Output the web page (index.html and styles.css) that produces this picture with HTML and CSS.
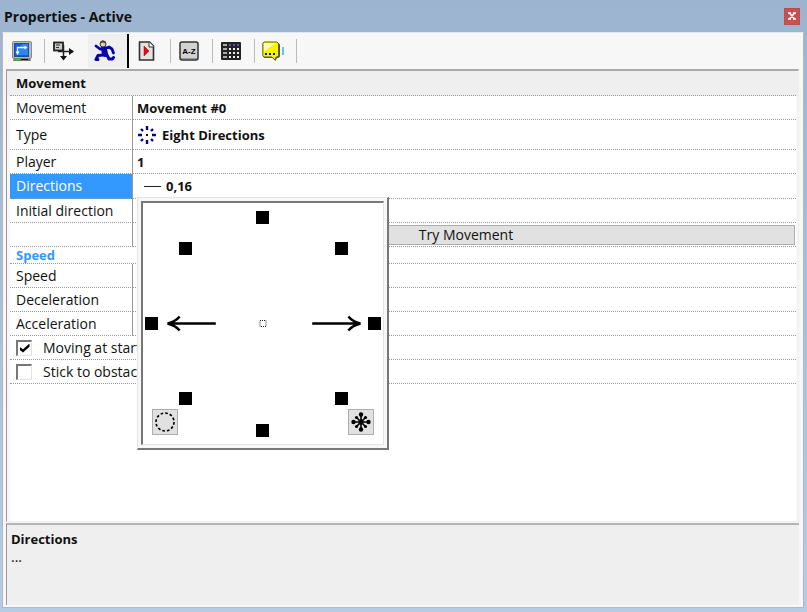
FILE: index.html
```html
<!DOCTYPE html>
<html lang="en">
<head>
<meta charset="utf-8">
<title>Properties - Active</title>
<link rel="stylesheet" href="styles.css">
</head>
<body>
<main class="window">
  <header class="titlebar">
    <h1 class="title">Properties - Active</h1>
    <button class="close" type="button" aria-label="Close">
      <svg width="8" height="8" viewBox="0 0 8 8"><path d="M0 1h3M5 1h3M0 7h3M5 7h3M1.500 1L6.500 7M6.500 1L1.500 7" fill="none" stroke="#fff" stroke-width="1.600"/></svg>
    </button>
  </header>
  <div class="client">
    <nav class="tabs">
      <button class="tab" type="button" aria-label="Display">
        <svg width="20" height="20" viewBox="0 0 20 20"><rect x=".5" y=".5" width="19" height="17" rx="1.500" fill="#b8b8b8" stroke="#8a8a8a"/><rect x="2.500" y="2.500" width="14" height="13" fill="#0b62d8" stroke="#1b4f9b"/><path d="M10 3h6v11H4z" fill="#2b86ee"/><path d="M5.500 12V6.500H14" fill="none" stroke="#fff" stroke-width="1.400"/><path d="M3.500 10.500h4L5.500 14zM12.500 4.500v4l3-2z" fill="#fff"/><path d="M2 17h16l1 3H1z" fill="#777"/><path d="M3 18.500h5" stroke="#1be01b" stroke-width="1.500"/><path d="M9 18.500h7" stroke="#111"/></svg>
      </button>
      <button class="tab" type="button" aria-label="Size and position">
        <svg width="22" height="20" viewBox="0 0 22 20"><rect x="1" y="1.500" width="9" height="8" fill="#ccc" stroke="#222" stroke-width="1.800"/><path d="M3 4h4M3 6.500h3" stroke="#333"/><path d="M10.500 4v14M5 10.500h15" fill="none" stroke="#222" stroke-width="1.500"/><path d="M16 7l5 3.500-5 3.500zM7 15h7l-3.500 4.500z" fill="#111"/></svg>
      </button>
      <button class="tab active" type="button" aria-label="Movement">
        <svg width="22" height="22" viewBox="0 0 22 22"><g fill="none" stroke="#0505ae" stroke-linejoin="round" stroke-linecap="round"><path d="M2 6l4 3 5-.5 4-1.500 3 2 1.500 4" stroke-width="2.800"/><path d="M10 9l1 5" stroke-width="6"/><path d="M9 15l-5 .500-2 4M2 19.500h2M13 15l2 4h3.500l1-1.500" stroke-width="3"/></g><circle cx="9" cy="4" r="3" fill="#e0d2ae" stroke="#333"/><path d="M6 3.500q0-3 3-3 3 0 3 3l-3-1z" fill="#444"/></svg>
      </button>
      <button class="tab" type="button" aria-label="Events">
        <svg width="18" height="20" viewBox="0 0 18 20"><path d="M1.500 1h10l4 4v14h-14z" fill="#e2e2e2" stroke="#303030" stroke-width="1.600"/><path d="M11 1v5h5" fill="#fff" stroke="#303030"/><path d="M6 5l5 5-5 5z" fill="#e30a17" stroke="#aa0000" stroke-width=".5"/></svg>
      </button>
      <button class="tab" type="button" aria-label="Values">
        <svg width="20" height="20" viewBox="0 0 20 20"><rect x="1" y="1" width="18" height="18" rx="2" fill="#d2d2d2" stroke="#333" stroke-width="1.500"/><path d="M2 17.500h16" stroke="#999"/><text x="10" y="13" text-anchor="middle" class="az">A-Z</text></svg>
      </button>
      <button class="tab" type="button" aria-label="Data">
        <svg width="20" height="18" viewBox="0 0 20 18"><rect width="20" height="18" rx="1" fill="#222"/><path d="M2 2h4v2H2zM2 6h4v2H2zM2 10h4v2H2zM2 14h4v2H2z" fill="#aaa"/><path d="M8 2h2v2H8zM12 2h2v2h-2zM16 2h2v2h-2z" fill="#5555c8"/><path d="M8 6h2v2H8zM12 6h2v2h-2zM16 6h2v2h-2zM8 10h2v2H8zM12 10h2v2h-2zM16 10h2v2h-2zM8 14h2v2H8zM12 14h2v2h-2zM16 14h2v2h-2z" fill="#eee"/></svg>
      </button>
      <button class="tab" type="button" aria-label="About">
        <svg width="22" height="20" viewBox="0 0 22 20"><path d="M2.500 2h14L18 3.500v12L16.500 17H15l-1.500 3-3-3H2.500L1 15.500z" fill="#555"/><path d="M2 1h13l1.500 1.500v12L15 16h-1l-1 3-3-3H2L.8 14.500v-12z" fill="#f8f400" stroke="#62620a"/><path d="M2 2h11L2 11z" fill="#ffffa8"/><path d="M3 12h2v2H3zM7 12h2v2H7zM11 12h2v2h-2z" fill="#111188"/><path d="M21 6v8" stroke="#3ab3e8" stroke-width="1.500"/></svg>
      </button>
    </nav>
    <section class="sheet">
      <table class="props">
        <colgroup><col class="name-col"><col></colgroup>
        <tbody>
          <tr class="group"><th colspan="2">Movement</th></tr>
          <tr><th>Movement</th><td>Movement #0</td></tr>
          <tr class="tall"><th>Type</th><td><span class="value"><svg width="20" height="20" viewBox="0 0 20 20"><path d="M10 1v4M10 15v4M1 10h4M15 10h4M4 4l2 2M16 4l-2 2M4 16l2-2M16 16l-2-2" stroke="#00008b" stroke-width="2.400"/><path d="M9 9h2v2H9z" fill="#111"/></svg>Eight Directions</span></td></tr>
          <tr><th>Player</th><td>1</td></tr>
          <tr class="selected"><th>Directions</th><td class="anchor"><span class="value dirs"><i class="dash"></i>0,16</span>
            <div class="popup">
              <div class="pad">
                <svg class="arrows" viewBox="0 0 238 240" aria-hidden="true"><g fill="none" stroke="#000" stroke-width="2.500"><path d="M72 120H24M36 113q-4 5-12 7 8 2 12 7"/><path d="M168 120h48M204 113q4 5 12 7-8 2-12 7"/></g><rect x="116" y="117" width="6" height="6" fill="none" stroke="#222" stroke-dasharray="1 1"/></svg>
                <button class="dot n" type="button" aria-label="Up"></button>
                <button class="dot ne" type="button" aria-label="Up right"></button>
                <button class="dot e" type="button" aria-label="Right"></button>
                <button class="dot se" type="button" aria-label="Down right"></button>
                <button class="dot s" type="button" aria-label="Down"></button>
                <button class="dot sw" type="button" aria-label="Down left"></button>
                <button class="dot w" type="button" aria-label="Left"></button>
                <button class="dot nw" type="button" aria-label="Up left"></button>
                <button class="pick none" type="button" aria-label="Clear all"><svg width="22" height="22" viewBox="0 0 22 22"><circle cx="11" cy="11" r="9" fill="none" stroke="#000" stroke-width="1.600" stroke-dasharray="2.700 2"/></svg></button>
                <button class="pick all" type="button" aria-label="Select all"><svg width="22" height="22" viewBox="0 0 22 22"><path d="M11 3v16M3 11h16M6.500 6.500l9 9M15.500 6.500l-9 9" stroke="#000" stroke-width="1.600"/><circle cx="11" cy="3.500" r="2.200"/><circle cx="11" cy="18.500" r="2.200"/><circle cx="3.500" cy="11" r="2.200"/><circle cx="18.500" cy="11" r="2.200"/><circle cx="6.500" cy="6.500" r="1.600"/><circle cx="15.500" cy="6.500" r="1.600"/><circle cx="6.500" cy="15.500" r="1.600"/><circle cx="15.500" cy="15.500" r="1.600"/><circle cx="11" cy="11" r="2.600"/></svg></button>
              </div>
            </div></td></tr>
          <tr><th>Initial direction</th><td></td></tr>
          <tr><th></th><td class="action"><button class="try" type="button">Try Movement</button></td></tr>
          <tr class="subgroup"><th colspan="2">Speed</th></tr>
          <tr><th>Speed</th><td></td></tr>
          <tr><th>Deceleration</th><td></td></tr>
          <tr><th>Acceleration</th><td></td></tr>
          <tr class="check"><td colspan="2"><label><input type="checkbox" checked>Moving at start</label></td></tr>
          <tr class="check"><td colspan="2"><label><input type="checkbox">Stick to obstacles</label></td></tr>
        </tbody>
      </table>
    </section>
    <section class="help">
      <h2>Directions</h2>
      <p>...</p>
    </section>
  </div>
</main>
</body>
</html>
```
FILE: styles.css
```css
* { box-sizing: border-box; }
body {
  margin: 0;
  font: 14px/18px "Open Sans", "Noto Sans", sans-serif;
  color: #111;
}
button { font: inherit; color: inherit; padding: 0; border: 0; background: none; }
svg { display: block; }
h1, h2, p { margin: 0; }
.window {
  display: flex;
  flex-direction: column;
  min-height: 100vh;
  padding: 0 3px 4px 2px;
  background: linear-gradient(#9cb4cf, #b5cce4);
}
.titlebar {
  display: flex;
  align-items: center;
  justify-content: space-between;
  height: 32px;
  padding: 0 4px 0 2px;
}
.title { font-size: 14px; font-weight: 700; line-height: 20px; padding-top: 2px; }
.close {
  display: grid;
  place-items: center;
  width: 16px;
  height: 17px;
  border: 1px solid #b64d57;
  background: #c75050;
}
.client {
  flex: 1;
  display: flex;
  flex-direction: column;
  padding: 0 4px 2px 3px;
  background: #f7f7f7;
  border: 1px solid #b4b8bc;
  border-top-color: #dfe8f1;
}
.tabs { display: flex; height: 36px; align-items: center; }
.tab {
  display: grid;
  place-items: center;
  width: 42px;
  height: 24px;
  padding-right: 5px;
  border-right: 1px solid #bbb;
}
.tab:first-child { width: 39px; padding-right: 7px; }
.tab:nth-child(2) { width: 41px; padding-right: 3px; border-right-color: transparent; }
.tab.active { width: 41px; height: 34px; margin-left: 2px; background: #efefef; border-right: 2px solid #000; }
.az { font: 700 8px "Liberation Sans", sans-serif; }
.sheet {
  flex: 1;
  padding: 0 2px 0 3px;
  background: #fff content-box;
  border: 1px solid #eee;
  border-top: 2px solid #aaa;
  border-left: 1px solid #999;
}
.props { width: 100%; table-layout: fixed; border-collapse: separate; border-spacing: 0; }
.name-col { width: 123px; }
.props tr { height: 24px; }
.props th, .props td {
  padding: 0 6px;
  border-bottom: 1px dotted #999;
  text-align: left;
  white-space: nowrap;
}
.props th { font-weight: 400; border-right: 1px solid #999; }
.props td { font-size: 13px; font-weight: 700; padding-left: 4px; }
.props tr.tall { height: 30px; }
.props .group th {
  height: 25px;
  font-size: 13px;
  font-weight: 700;
  background: #efefef;
  border-right: 0;
  box-shadow: -3px 0 #efefef, 2px 0 #efefef;
}
.props tr.subgroup { height: 17px; }
.props .subgroup th { font-size: 13px; color: #3399ff; font-weight: 700; line-height: 16px; border-right: 0; }
.props .selected th { height: 25px; background: #3399ff; color: #fff; }
.value { display: flex; align-items: center; gap: 5px; }
.dirs { padding-left: 7px; }
.dash { width: 17px; height: 1px; background: #222; }
.anchor { position: relative; }
.props td.action { padding: 1px 1px 1px 4px; }
.try {
  display: block;
  width: 100%;
  height: 20px;
  font-size: 14px;
  font-weight: 400;
  line-height: 18px;
  background: #e1e1e1;
  border: 1px solid #adadad;
}
.props .check td { font-size: 14px; font-weight: 400; padding-left: 6px; }
.check label { display: flex; align-items: center; gap: 11px; }
.check input {
  appearance: none;
  display: grid;
  place-items: center;
  width: 16px;
  height: 16px;
  margin: 0;
  background: #fff;
  border: 1px solid #e3e3e3;
  border-top: 2px solid #777;
  border-left: 2px solid #777;
}
.check input:checked::before {
  content: "";
  width: 10px;
  height: 9px;
  background: #000;
  clip-path: polygon(0 35%, 35% 65%, 100% 0, 100% 35%, 35% 100%, 0 70%);
}
.popup {
  position: absolute;
  z-index: 1;
  top: 100%;
  left: 4px;
  width: 252px;
  height: 253px;
  margin-top: -1px;
  padding: 3px;
  font-size: 13px;
  background: #f7f7f7;
  border: 1px solid #e3e3e3;
  border-right: 2px solid #777;
  border-bottom: 2px solid #777;
}
.pad {
  position: relative;
  height: 100%;
  background: #fff;
  border: 1px solid #e3e3e3;
  border-top: 2px solid #777;
  border-left: 2px solid #777;
}
.arrows { width: 100%; height: 100%; }
.dot, .pick { position: absolute; }
.dot { width: 13px; height: 13px; background: #000; }
.n { top: 8px; left: 113px; }
.ne { top: 39px; right: 35px; }
.e { top: 114px; right: 2px; }
.se { bottom: 39px; right: 35px; }
.s { bottom: 7px; left: 113px; }
.sw { bottom: 39px; left: 36px; }
.w { top: 114px; left: 2px; }
.nw { top: 39px; left: 36px; }
.pick {
  display: grid;
  place-items: center;
  width: 26px;
  height: 26px;
  bottom: 9px;
  background: #e1e1e1;
  border: 1px solid #adadad;
}
.none { left: 9px; }
.all { right: 9px; }
.help {
  height: 82px;
  margin-top: 1px;
  padding: 5px 4px;
  background: #efefef;
  border-top: 2px solid #b4b4b4;
  border-left: 1px solid #999;
}
.help h2 { font-size: 13px; font-weight: 700; }
```
